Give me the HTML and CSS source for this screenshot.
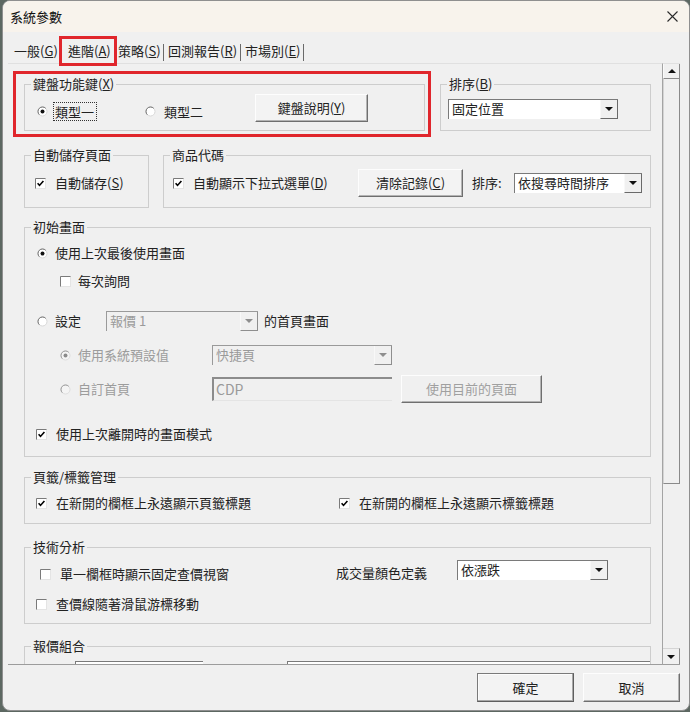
FILE: index.html
```html
<!DOCTYPE html>
<html lang="zh-Hant">
<head>
<meta charset="utf-8">
<title>系統參數</title>
<link rel="stylesheet" href="styles.css">
</head>
<body>
<div class="window">
  <div class="titlebar">
    <span class="title">系統參數</span>
    <svg class="close" width="11" height="11" viewBox="0 0 11 11"><path d="M0.5 0.5L10.5 10.5M10.5 0.5L0.5 10.5" stroke="#2a2a2a" stroke-width="1.1" fill="none"/></svg>
  </div>
  <div class="tabs">
    <span class="tab t1">一般(<u>G</u>)</span>
    <span class="tab active">進階(<u>A</u>)</span>
    <span class="tab t3">策略(<u>S</u>)</span><span class="sep"></span>
    <span class="tab t4">回測報告(<u>R</u>)</span><span class="sep"></span>
    <span class="tab t5">市場別(<u>E</u>)</span><span class="sep"></span>
  </div>
  <div class="main">
    <div class="pane">
      <div class="content">
        <div class="row r1">
          <div class="redbox">
            <fieldset class="grp kb">
              <legend>鍵盤功能鍵(<u>X</u>)</legend>
              <div class="kb-row">
                <div class="opt o1">
                  <svg class="rd" width="11" height="11" viewBox="0 0 11 11"><circle cx="5.5" cy="5.5" r="4.5" fill="#fff" stroke="#d8d8d8"/><path d="M2.3 8.7A4.5 4.5 0 0 1 8.7 2.3" fill="none" stroke="#707070"/><circle cx="5.5" cy="5.5" r="2" fill="#111"/></svg>
                  <span class="focus">類型一</span>
                </div>
                <div class="opt o2">
                  <svg class="rd" width="11" height="11" viewBox="0 0 11 11"><circle cx="5.5" cy="5.5" r="4.5" fill="#fff" stroke="#d8d8d8"/><path d="M2.3 8.7A4.5 4.5 0 0 1 8.7 2.3" fill="none" stroke="#707070"/></svg>
                  <span class="o2-label">類型二</span>
                </div>
                <div class="btn kb-btn">鍵盤說明(<u>Y</u>)</div>
              </div>
            </fieldset>
          </div>
          <fieldset class="grp sort">
            <legend>排序(<u>B</u>)</legend>
            <div class="combo w170"><span class="val">固定位置</span><span class="arrow"><i class="tri"></i></span></div>
          </fieldset>
        </div>

        <div class="row r2">
          <fieldset class="grp autosave">
            <legend>自動儲存頁面</legend>
            <div class="line28">
              <div class="chk">
                <svg class="cb" width="11" height="11" viewBox="0 0 11 11"><rect x="0.5" y="0.5" width="10" height="10" fill="#fff" stroke="#e4e4e4"/><path d="M0.5 10.5V0.5H10.5" fill="none" stroke="#7a7a7a"/><path d="M2.6 5.3l1.9 2.1 3.9-4.5" fill="none" stroke="#000" stroke-width="1.6"/></svg>
                <span>自動儲存(<u>S</u>)</span>
              </div>
            </div>
          </fieldset>
          <fieldset class="grp code">
            <legend>商品代碼</legend>
            <div class="line28">
              <div class="chk w185">
                <svg class="cb" width="11" height="11" viewBox="0 0 11 11"><rect x="0.5" y="0.5" width="10" height="10" fill="#fff" stroke="#e4e4e4"/><path d="M0.5 10.5V0.5H10.5" fill="none" stroke="#7a7a7a"/><path d="M2.6 5.3l1.9 2.1 3.9-4.5" fill="none" stroke="#000" stroke-width="1.6"/></svg>
                <span>自動顯示下拉式選單(<u>D</u>)</span>
              </div>
              <div class="btn clear-btn">清除記錄(<u>C</u>)</div>
              <span class="sort-lbl">排序:</span>
              <div class="combo w128"><span class="val">依搜尋時間排序</span><span class="arrow"><i class="tri"></i></span></div>
            </div>
          </fieldset>
        </div>

        <fieldset class="grp init">
          <legend>初始畫面</legend>
          <div class="l1 line18">
            <div class="ropt">
              <svg class="rd" width="11" height="11" viewBox="0 0 11 11"><circle cx="5.5" cy="5.5" r="4.5" fill="#fff" stroke="#d8d8d8"/><path d="M2.3 8.7A4.5 4.5 0 0 1 8.7 2.3" fill="none" stroke="#707070"/><circle cx="5.5" cy="5.5" r="2" fill="#111"/></svg>
              <span>使用上次最後使用畫面</span>
            </div>
          </div>
          <div class="l2 line18">
            <div class="chk g7">
              <svg class="cb" width="11" height="11" viewBox="0 0 11 11"><rect x="0.5" y="0.5" width="10" height="10" fill="#fff" stroke="#e4e4e4"/><path d="M0.5 10.5V0.5H10.5" fill="none" stroke="#7a7a7a"/></svg>
              <span>每次詢問</span>
            </div>
          </div>
          <div class="l3 line20">
            <div class="ropt w69">
              <svg class="rd" width="11" height="11" viewBox="0 0 11 11"><circle cx="5.5" cy="5.5" r="4.5" fill="#fff" stroke="#d8d8d8"/><path d="M2.3 8.7A4.5 4.5 0 0 1 8.7 2.3" fill="none" stroke="#707070"/></svg>
              <span>設定</span>
            </div>
            <div class="combo disabled w152"><span class="val">報價 1</span><span class="arrow"><i class="tri"></i></span></div>
            <span class="after">的首頁畫面</span>
          </div>
          <div class="l4 line20">
            <div class="ropt dis w152">
              <svg class="rd" width="11" height="11" viewBox="0 0 11 11"><circle cx="5.5" cy="5.5" r="4.5" fill="#f4f4f4" stroke="#dedede"/><path d="M2.3 8.7A4.5 4.5 0 0 1 8.7 2.3" fill="none" stroke="#9a9a9a"/><circle cx="5.5" cy="5.5" r="2" fill="#8a8a8a"/></svg>
              <span>使用系統預設值</span>
            </div>
            <div class="combo disabled w180"><span class="val">快捷頁</span><span class="arrow"><i class="tri"></i></span></div>
          </div>
          <div class="l5 line28">
            <div class="ropt dis w152">
              <svg class="rd" width="11" height="11" viewBox="0 0 11 11"><circle cx="5.5" cy="5.5" r="4.5" fill="#f4f4f4" stroke="#dedede"/><path d="M2.3 8.7A4.5 4.5 0 0 1 8.7 2.3" fill="none" stroke="#9a9a9a"/></svg>
              <span>自訂首頁</span>
            </div>
            <div class="input disabled w180">CDP</div>
            <div class="btn disabled cur-btn">使用目前的頁面</div>
          </div>
          <div class="l6 line18">
            <div class="chk">
              <svg class="cb" width="11" height="11" viewBox="0 0 11 11"><rect x="0.5" y="0.5" width="10" height="10" fill="#fff" stroke="#e4e4e4"/><path d="M0.5 10.5V0.5H10.5" fill="none" stroke="#7a7a7a"/><path d="M2.6 5.3l1.9 2.1 3.9-4.5" fill="none" stroke="#000" stroke-width="1.6"/></svg>
              <span>使用上次離開時的畫面模式</span>
            </div>
          </div>
        </fieldset>

        <fieldset class="grp tabmgr">
          <legend>頁籤/標籤管理</legend>
          <div class="line18">
            <div class="chk w303">
              <svg class="cb" width="11" height="11" viewBox="0 0 11 11"><rect x="0.5" y="0.5" width="10" height="10" fill="#fff" stroke="#e4e4e4"/><path d="M0.5 10.5V0.5H10.5" fill="none" stroke="#7a7a7a"/><path d="M2.6 5.3l1.9 2.1 3.9-4.5" fill="none" stroke="#000" stroke-width="1.6"/></svg>
              <span>在新開的欄框上永遠顯示頁籤標題</span>
            </div>
            <div class="chk">
              <svg class="cb" width="11" height="11" viewBox="0 0 11 11"><rect x="0.5" y="0.5" width="10" height="10" fill="#fff" stroke="#e4e4e4"/><path d="M0.5 10.5V0.5H10.5" fill="none" stroke="#7a7a7a"/><path d="M2.6 5.3l1.9 2.1 3.9-4.5" fill="none" stroke="#000" stroke-width="1.6"/></svg>
              <span>在新開的欄框上永遠顯示標籤標題</span>
            </div>
          </div>
        </fieldset>

        <fieldset class="grp tech">
          <legend>技術分析</legend>
          <div class="tech-l1">
            <div class="chk w300 t5">
              <svg class="cb" width="11" height="11" viewBox="0 0 11 11"><rect x="0.5" y="0.5" width="10" height="10" fill="#fff" stroke="#e4e4e4"/><path d="M0.5 10.5V0.5H10.5" fill="none" stroke="#7a7a7a"/></svg>
              <span>單一欄框時顯示固定查價視窗</span>
            </div>
            <span class="vol-lbl">成交量顏色定義</span>
            <div class="combo w151"><span class="val">依漲跌</span><span class="arrow"><i class="tri"></i></span></div>
          </div>
          <div class="tech-l2 line18">
            <div class="chk">
              <svg class="cb" width="11" height="11" viewBox="0 0 11 11"><rect x="0.5" y="0.5" width="10" height="10" fill="#fff" stroke="#e4e4e4"/><path d="M0.5 10.5V0.5H10.5" fill="none" stroke="#7a7a7a"/></svg>
              <span>查價線隨著滑鼠游標移動</span>
            </div>
          </div>
        </fieldset>

        <fieldset class="grp quote">
          <legend>報價組合</legend>
          <div class="quote-row">
            <div class="qbox q1"></div>
            <div class="qbox q2"></div>
          </div>
        </fieldset>
      </div>
    </div>
    <div class="scroll">
      <div class="sb-up"><i class="tri up"></i></div>
      <div class="thumb"></div>
      <div class="track"></div>
      <div class="sb-down"><i class="tri"></i></div>
    </div>
  </div>
  <div class="footer">
    <div class="btn ok-btn">確定</div>
    <div class="btn cancel-btn">取消</div>
  </div>
</div>
</body>
</html>
```

FILE: styles.css
```css
* { box-sizing: border-box; }
body {
  margin: 0;
  background: #5d6862;
  font-family: "Noto Sans CJK TC", "Noto Sans", sans-serif;
  font-size: 13px;
  color: #222;
  line-height: 18px;
}
u { text-decoration: underline; text-underline-offset: 1px; }

.window {
  margin-left: 2px;
  width: 688px;
  height: 711px;
  border: 1px solid #8f8f8f;
  border-radius: 8px;
  background: #f0f0f0;
  display: flex;
  flex-direction: column;
  overflow: hidden;
}

.titlebar {
  height: 31px;
  flex: none;
  background: #f8f3ec;
  display: flex;
  align-items: center;
  padding-left: 7px;
}
.title { font-size: 13px; color: #111; }
.close { margin-left: auto; margin-right: 11px; }

.tabs {
  height: 31px;
  flex: none;
  display: flex;
  align-items: flex-start;
  padding: 4px 0 0 11px;
  position: relative;
  z-index: 1;
}
.tab { height: 30px; line-height: 30px; white-space: nowrap; color: #222; }
.t1 { width: 45px; }
.tab.active {
  width: 58px;
  border: 3px solid #e0262c;
  line-height: 24px;
  padding-left: 6px;
}
.t3 { width: 46px; padding-left: 1px; }
.t4 { width: 76px; padding-left: 4px; }
.t5 { width: 62px; padding-left: 4px; }
.sep { width: 1px; height: 17px; margin-top: 8px; background: #6a6a6a; }

.main { display: flex; height: 602px; flex: none; }
.pane {
  width: 654px;
  margin-left: 5px;
  border-top: 1px solid #e0e0e0;
  border-bottom: 1px solid #9c9c9c;
  overflow: hidden;
}
.content { padding: 7px 11px 0 16px; }

.scroll {
  width: 18px;
  border-top: 1px solid #e0e0e0;
  border-left: 1px solid #a4a4a4;
  border-bottom: 1px solid #9c9c9c;
  display: flex;
  flex-direction: column;
}
.sb-up {
  height: 15px;
  border-left: 1px solid #fafafa;
  border-right: 1px solid #8a8a8a;
  border-bottom: 1px solid #8a8a8a;
  display: flex;
  align-items: center;
  justify-content: center;
}
.thumb {
  height: 405px;
  border-left: 1px solid #d4d4d4;
  border-right: 1px solid #8a8a8a;
  border-bottom: 1px solid #8a8a8a;
}
.track { flex: 1; }
.sb-down {
  height: 16px;
  border-top: 1px solid #d4d4d4;
  border-right: 1px solid #8a8a8a;
  display: flex;
  align-items: center;
  justify-content: center;
}

.tri {
  display: block;
  width: 0;
  height: 0;
  border-left: 4px solid transparent;
  border-right: 4px solid transparent;
  border-top: 4px solid #111;
}
.tri.up { border-top: 0; border-bottom: 4px solid #111; }

/* group boxes */
.grp {
  margin: 0;
  padding: 0;
  border: 1px solid #cdcdcd;
  min-width: 0;
}
.grp legend {
  margin-left: 6px;
  padding: 0 2px;
  line-height: 14px;
  font-size: 13px;
  color: #222;
}

.row { display: flex; align-items: flex-start; }

.redbox {
  margin-left: -11px;
  width: 418px;
  border: 3px solid #e0262c;
  padding: 3px 3px 3px 8px;
}
.kb { padding: 3px 0 8px 12px; }
.kb legend { margin-left: -6px; }
.kb-row { display: flex; align-items: flex-start; }
.opt { display: flex; align-items: center; height: 19px; margin-top: 8px; }
.o1 { width: 109px; }
.o2 { width: 110px; margin-left: -1px; }
.focus {
  margin-left: 5px;
  border: 1px dotted #333;
  padding: 0 2px 0 1px;
  line-height: 17px;
}
.o2-label { margin-left: 8px; }
.kb-btn { width: 113px; height: 28px; }

.sort { flex: 1; margin-left: 9px; margin-top: 6px; padding: 8px 0 11px 7px; }
.sort legend { margin-left: -1px; }

.r2 { margin-top: 11px; }
.autosave { width: 125px; padding: 7px 0 10px 10px; }
.autosave legend { margin-left: -4px; }
.code { flex: 1; margin-left: 14px; padding: 7px 0 10px 9px; }
.code legend { margin-left: -3px; }

.line28 { display: flex; align-items: center; height: 28px; }
.line18 { display: flex; align-items: center; height: 18px; }
.line20 { display: flex; align-items: center; height: 20px; }

.chk { display: flex; align-items: center; gap: 9px; white-space: nowrap; }
.chk.g7 { gap: 7px; }
.ropt { display: flex; align-items: center; gap: 7px; white-space: nowrap; }
.ropt.dis { color: #9c9c9c; }
.w185 { width: 185px; }
.w303 { width: 303px; }
.w300 { width: 300px; }
.w69 { width: 69px; flex: none; }
.w152 { width: 152px; flex: none; }
.w151 { width: 151px; flex: none; }
.w170 { width: 170px; }
.w128 { width: 128px; flex: none; }
.w180 { width: 180px; flex: none; }

.clear-btn { width: 105px; height: 28px; flex: none; }
.sort-lbl { width: 42px; margin-left: 9px; flex: none; }

/* buttons */
.btn {
  display: flex;
  align-items: center;
  justify-content: center;
  background: #f3f3f3;
  border: 1px solid;
  border-color: #fdfdfd #6f6f6f #6f6f6f #fdfdfd;
  box-shadow: inset -1px -1px 0 #b4b4b4;
  white-space: nowrap;
  color: #222;
}
.btn.disabled { color: #a0a0a0; background: #f0f0f0; }

/* combos */
.combo {
  display: flex;
  height: 20px;
  background: #fff;
  border-top: 1px solid #7a7a7a;
  border-left: 1px solid #7a7a7a;
}
.combo .val { flex: 1; padding-left: 3px; line-height: 18px; white-space: nowrap; overflow: hidden; }
.combo .arrow {
  width: 18px;
  flex: none;
  background: #f0f0f0;
  border-left: 1px solid #f8f8f8;
  border-right: 1px solid #6a6a6a;
  border-bottom: 1px solid #6a6a6a;
  display: flex;
  align-items: center;
  justify-content: center;
}
.combo.disabled { background: #f0f0f0; border-color: #9a9a9a; color: #9a9a9a; }
.combo.disabled .arrow { border-right-color: #8e8e8e; border-bottom-color: #8e8e8e; }
.combo.disabled .tri { border-top-color: #8e8e8e; }

.input {
  height: 24px;
  border-top: 2px solid #8c8c8c;
  border-left: 2px solid #8c8c8c;
  border-bottom: 1px solid #e4e4e4;
  padding-left: 2px;
  line-height: 20px;
  font-size: 14px;
}
.input.disabled { color: #9a9a9a; background: #f0f0f0; }

.init { margin-top: 12px; padding: 10px 0 13px 12px; }
.init legend { margin-left: -6px; }
.l2 { margin-top: 10px; padding-left: 23px; }
.l3 { margin-top: 21px; }
.after { margin-left: 6px; }
.l4 { margin-top: 14px; padding-left: 23px; }
.l5 { margin-top: 10px; padding-left: 23px; }
.cur-btn { width: 141px; height: 28px; margin-left: 9px; flex: none; }
.l6 { margin-top: 22px; margin-left: -1px; }

.tabmgr { margin-top: 13px; padding: 10px 0 11px 11px; }
.tabmgr legend { margin-left: -5px; }

.tech { margin-top: 16px; padding: 6px 0 10px 11px; }
.tech legend { margin-left: -5px; }
.tech-l1 { display: flex; align-items: flex-start; height: 23px; }
.tech-l1 .t5 { margin-top: 5px; height: 18px; }
.vol-lbl { width: 121px; margin-top: 4px; flex: none; white-space: nowrap; }
.tech-l2 { margin-top: 12px; }

.quote { margin-top: 15px; padding: 8px 0 0 0; }
.quote-row { display: flex; }
.qbox { height: 20px; background: #fff; border-top: 1px solid #7a7a7a; border-left: 1px solid #7a7a7a; }
.q1 { width: 128px; margin-left: 50px; }
.q2 { width: 363px; margin-left: 84px; }

.footer {
  flex: 1;
  display: flex;
  justify-content: flex-end;
  align-items: flex-start;
  gap: 9px;
  padding: 8px 9px 0 0;
}
.ok-btn {
  width: 97px;
  height: 29px;
  border-color: #7a7a7a #5e5e5e #5e5e5e #7a7a7a;
  box-shadow: inset -1px -1px 0 #a8a8a8, inset 1px 1px 0 #fcfcfc;
}
.cancel-btn { width: 97px; height: 29px; }
```
